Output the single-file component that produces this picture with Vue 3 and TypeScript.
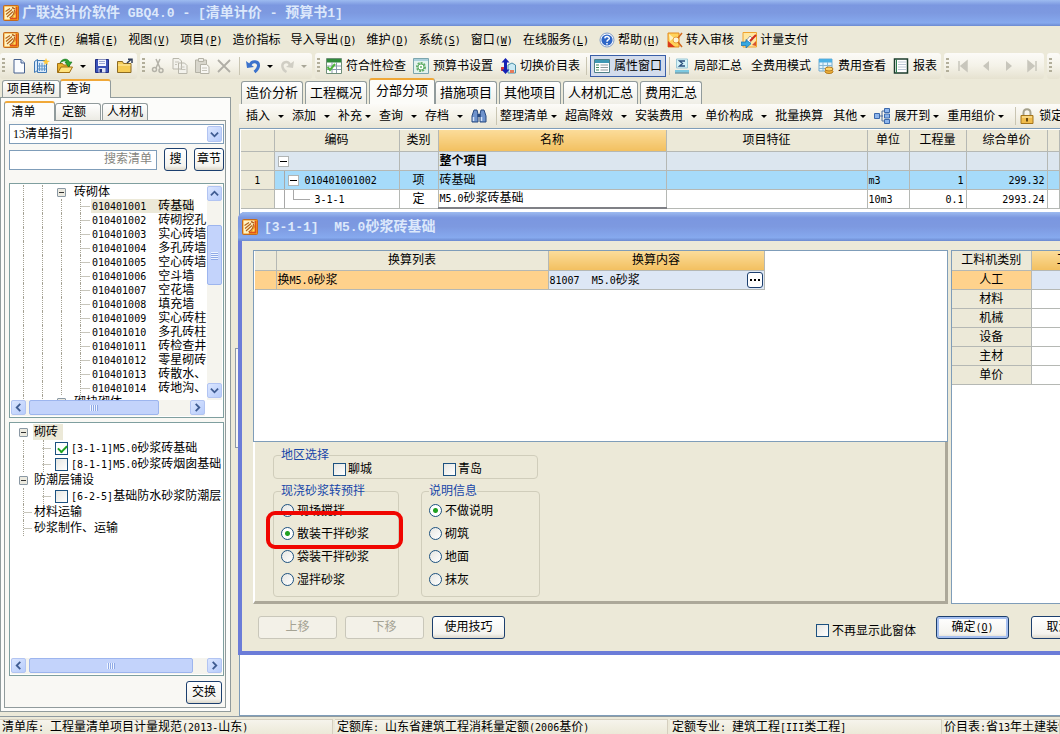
<script setup lang="ts">
import { h, ref } from 'vue'

// Splits mixed text so that half-width characters get the fixed-pitch face.
const Mix = (props: { s: string }) =>
  h(
    'span',
    { class: 'mix' },
    props.s
      .split(/([\x20-\x7e]+)/)
      .filter(Boolean)
      .map((part) => (/^[\x20-\x7e]/.test(part) ? h('span', { class: 'half' }, part) : part)),
  )
Mix.props = ['s']

interface MenuItem { label: string; key?: string; icon?: string }
const menu: MenuItem[] = [
  { label: '文件', key: 'F' },
  { label: '编辑', key: 'E' },
  { label: '视图', key: 'V' },
  { label: '项目', key: 'P' },
  { label: '造价指标' },
  { label: '导入导出', key: 'D' },
  { label: '维护', key: 'D' },
  { label: '系统', key: 'S' },
  { label: '窗口', key: 'W' },
  { label: '在线服务', key: 'L' },
  { label: '帮助', key: 'H', icon: 'help' },
  { label: '转入审核', icon: 'audit' },
  { label: '计量支付', icon: 'pay' },
]

interface Action { label?: string; icon?: string; caret?: 'near' | 'far'; sep?: boolean; flat?: boolean }
const actions: Action[] = [
  { label: '插入', caret: 'far' },
  { label: '添加', caret: 'far' },
  { label: '补充', caret: 'near' },
  { label: '查询', caret: 'far' },
  { label: '存档', caret: 'far' },
  { icon: 'find' },
  { sep: true },
  { label: '整理清单', caret: 'near' },
  { label: '超高降效', caret: 'far' },
  { label: '安装费用', caret: 'far' },
  { label: '单价构成', caret: 'far' },
  { label: '批量换算', flat: true },
  { label: '其他', caret: 'near' },
  { label: '展开到', icon: 'expand', caret: 'near' },
  { label: '重用组价', caret: 'near' },
  { sep: true },
  { label: '锁定', icon: 'lock' },
]

const pages = ['造价分析', '工程概况', '分部分项', '措施项目', '其他项目', '人材机汇总', '费用汇总']
const page = ref('分部分项')

const listItems = [
  '砖基础', '砖砌挖孔', '实心砖墙', '多孔砖墙', '空心砖墙', '空斗墙', '空花墙',
  '填充墙', '实心砖柱', '多孔砖柱', '砖检查井', '零星砌砖', '砖散水、', '砖地沟、',
].map((name, i) => ({ code: '0104010' + String(i + 1).padStart(2, '0'), name }))

const kinds = ['材料', '机械', '设备', '主材', '单价']
const mortar = ref('散装干拌砂浆')
const mortars = ['现场搅拌', '散装干拌砂浆', '袋装干拌砂浆', '湿拌砂浆']
const note = ref('不做说明')
const notes = ['不做说明', '砌筑', '地面', '抹灰']
const regions = ['聊城', '青岛']
const picked = ref(true)
const library = ref('13清单指引')
</script>

<template>
  <div class="app">
    <svg class="defs" aria-hidden="true">
      <symbol id="i-app" viewBox="0 0 16 16">
        <rect x=".5" y=".5" width="15" height="15" rx="1" fill="#f39a1c" stroke="#c46a1c" />
        <path d="M1.500 1.500h11v4l-2 5-4 4h-5z" fill="#fff3c4" />
        <path d="M2.500 6.500L7 3.500M3 9.500l6-5M4 12l6-5.500M6.500 13c3-1.500 5-4 5-8" fill="none" stroke="#b5651c" stroke-width="1.200" />
        <path d="M9 2.500l3 1.500" stroke="#b5651c" stroke-width="1.500" />
        <path d="M13.500 2v11.500H7" fill="none" stroke="#e0501c" stroke-width="1.500" />
        <path d="M10 12.500l2.500-4v4z" fill="#ffe060" />
      </symbol>
      <symbol id="i-help" viewBox="0 0 16 16">
        <circle cx="8" cy="8" r="7" fill="#fff" stroke="#7f9cc8" />
        <circle cx="8" cy="8" r="5.6" fill="#2e66c6" />
        <path d="M5.8 6.4C6 4 10.400 4 10.300 6.500 10.200 8 8 8 8 9.700M8 11v1.400" fill="none" stroke="#fff" stroke-width="1.500" />
      </symbol>
      <symbol id="i-audit" viewBox="0 0 16 16">
        <path d="M1 1h11v14H1z" fill="#ffd35a" stroke="#e58a1e" />
        <path d="M1 15V9l7 6z" fill="#d93a1c" />
        <path d="M2 2l5 4-4 3z" fill="#fff1c0" />
        <circle cx="9" cy="8" r="3" fill="#fff4d8" stroke="#e5a23e" />
        <path d="M11 6l4-5M11 10l4 5" stroke="#d2691e" stroke-width="1.500" />
      </symbol>
      <symbol id="i-pay" viewBox="0 0 16 16">
        <path d="M2 .5h13.500V15H2z" fill="#ffe7a0" stroke="#f0a22e" />
        <path d="M4 10l5-6 3 3-5 6z" fill="#fff" stroke="#8a8a8a" stroke-width=".8" />
        <path d="M9 9l6-6" stroke="#cf2a1c" stroke-width="2" />
        <path d="M11 13l4-4v5z" fill="#d9552c" />
        <path d="M0 10h5V7.500l5 4.200L5 16v-2.500H0z" fill="#36a8e0" stroke="#1a6fae" stroke-width=".7" />
      </symbol>
      <symbol id="i-new" viewBox="0 0 16 16">
        <path d="M3 1.500h7l3.500 3.500v10H3z" fill="#fafcff" stroke="#47618f" />
        <path d="M10 1.500V5h3.500" fill="#cfdcf2" stroke="#47618f" />
      </symbol>
      <symbol id="i-book" viewBox="0 0 16 16">
        <path d="M.5 3.500l3-2v11l-3 2zM3.500 2.500h9v12h-9z" fill="#d9e9fa" stroke="#3f78b4" />
        <path d="M5.500 5v8M8 5v8M10.500 7v6M4 8h8M4 11h8" stroke="#5f96cb" />
        <path d="M12 0l1 2.500L16 3l-2.500 1.500L14 7l-2-1.500L10 7l.5-2.500L8.500 3l2.500-.5z" fill="#ffc93c" />
      </symbol>
      <symbol id="i-open" viewBox="0 0 16 16">
        <path d="M.5 14.500v-9h5l1 1.500h6v7.500z" fill="#e8b22c" stroke="#a06f12" />
        <path d="M1 14.500L4 9h11.500l-3 5.500z" fill="#ffe27c" stroke="#a06f12" />
        <path d="M3 5C5 0 11 0 12.500 4h2.500L11.500 9 8 4h2C9 2.500 6 2.500 3 5z" fill="#2fa532" stroke="#12701a" stroke-width=".6" />
      </symbol>
      <symbol id="i-save" viewBox="0 0 16 16">
        <path d="M1.500 1.500h13v13h-13z" fill="#3b52b8" stroke="#202d80" />
        <path d="M4 1.500h8V8H4z" fill="#f4f6ff" />
        <path d="M5 3.500h6M5 5.500h6" stroke="#9aa6d4" />
        <path d="M4.500 10h7v4.500h-7z" fill="#dfe3f4" /><path d="M5.500 11h2.500v3.500H5.500z" fill="#202d80" />
      </symbol>
      <symbol id="i-folder" viewBox="0 0 16 16">
        <path d="M.5 3.500h5l1 2h7.500v9H.5z" fill="#f6cc55" stroke="#8d6b22" />
        <path d="M1 7h12.500" stroke="#fff0b0" />
        <path d="M10 5l4-3.500M11 1.300h4V5" fill="none" stroke="#33405c" stroke-width="1.500" />
      </symbol>
      <symbol id="i-cut" viewBox="0 0 16 16">
        <path d="M6 1l4 9M10 1L6 10" stroke="#b4b2a8" stroke-width="1.500" />
        <circle cx="4.500" cy="11.500" r="2" fill="none" stroke="#b4b2a8" stroke-width="1.500" />
        <circle cx="11" cy="12.500" r="2" fill="none" stroke="#b4b2a8" stroke-width="1.500" />
      </symbol>
      <symbol id="i-copy" viewBox="0 0 16 16">
        <path d="M1 .5h6l2.500 2.500v8H1zM6.500 5h6l2.500 2.500v8H6.500z" fill="#f3f2ec" stroke="#b9b7ac" />
        <path d="M3 4h4M3 6.500h2M8.500 9h4M8.500 11.500h5" stroke="#c6c4ba" />
      </symbol>
      <symbol id="i-paste" viewBox="0 0 16 16">
        <path d="M1.500 2h11v12.500h-11z" fill="#d8d6cc" stroke="#b4b2a6" />
        <path d="M4.500.5h5v3h-5z" fill="#efeee8" stroke="#b4b2a6" />
        <path d="M6.500 6.500h6l2.500 2v7H6.500z" fill="#f8f7f3" stroke="#b4b2a6" /><path d="M8 10h5M8 12.500h5" stroke="#c6c4ba" />
      </symbol>
      <symbol id="i-del" viewBox="0 0 16 16"><path d="M2 2l12 12M14 2L2 14" stroke="#b0aea6" stroke-width="1.800" /></symbol>
      <symbol id="i-undo" viewBox="0 0 16 16">
        <path d="M5 7c2-5 9-4 8.500 1-.3 2.500-1.500 4-4 6" fill="none" stroke="#3b72cc" stroke-width="3" />
        <path d="M1 3l1 7 7-1z" fill="#3b72cc" />
      </symbol>
      <symbol id="i-redo" viewBox="0 0 16 16">
        <path d="M11 7C9 2 2.500 4 3.500 9c.5 2.500 2 4 4 5" fill="none" stroke="#d0cec4" stroke-width="2.500" />
        <path d="M15 3l-1 7-7-1z" fill="#d0cec4" />
      </symbol>
      <symbol id="i-check" viewBox="0 0 16 16">
        <path d="M.5.500h15v15H.5z" fill="#fff" stroke="#6f8f78" /><path d="M1 1h14v3.500H1z" fill="#2f8a3a" />
        <path d="M1 8h14M1 11.500h14M6 4v11M10.500 4v11" stroke="#8a9cab" />
        <path d="M1.500 9l2.500 3 5-6" fill="none" stroke="#4cb53c" stroke-width="2" />
      </symbol>
      <symbol id="i-gear" viewBox="0 0 16 16">
        <path d="M.5.500h15v15H.5z" fill="#e4f3ee" stroke="#7ca6ae" /><path d="M1 1h14v2H1z" fill="#a9cfdc" />
        <circle cx="8" cy="9" r="4" fill="none" stroke="#62ae68" stroke-width="2" stroke-dasharray="2 1" />
        <circle cx="8" cy="9" r="3" fill="#fff" stroke="#62ae68" /><circle cx="8" cy="9" r="1" fill="#62ae68" />
      </symbol>
      <symbol id="i-swap" viewBox="0 0 16 16">
        <path d="M1 9h3v4H1z" fill="#d33a3a" /><path d="M8 7l4-2 3.500 2v8H8z" fill="#cbeaf4" stroke="#4a8ea8" />
        <path d="M10 12h4v3h-4z" fill="#e57a5a" />
        <path d="M5.500 0l4 4.500H7v7h2.500l-4 4.500-4-4.500H4v-7H1.500z" fill="#1420b4" />
      </symbol>
      <symbol id="i-props" viewBox="0 0 16 16">
        <path d="M.5 1.500h15v13H.5z" fill="#fff" stroke="#4e8088" /><path d="M1 2h14v3H1z" fill="#3d98b4" />
        <path d="M2 7h3M2 9.500h3M2 12h3" stroke="#3d8a58" /><path d="M6.500 7H14M6.500 9.500H14M6.500 12H14" stroke="#8d9a9d" />
      </symbol>
      <symbol id="i-sum" viewBox="0 0 16 16">
        <path d="M2.500 1h11v9h-11z" fill="#d5f2f8" stroke="#9cc8d6" />
        <path d="M11 3H5.500l3 2.500-3 2.500H11" fill="none" stroke="#2c4f7c" stroke-width="1.300" />
        <path d="M1 12h14v2.500H1z" fill="#7cc8e0" /><path d="M1 15h14" stroke="#3a7a94" />
      </symbol>
      <symbol id="i-fee" viewBox="0 0 16 16">
        <path d="M1 1h13v12H1z" fill="#e5f4fc" stroke="#74acd0" /><path d="M1 1h13v3.500H1z" fill="#4cb0e4" />
        <path d="M1 7.500h13M1 10.500h13M5 4v9M9.500 4v9" stroke="#86b6d4" />
        <ellipse cx="11" cy="13.500" rx="4" ry="2" fill="#f4b53c" stroke="#b2781c" />
        <ellipse cx="11" cy="11" rx="4" ry="2" fill="#ffd468" stroke="#b2781c" />
      </symbol>
      <symbol id="i-report" viewBox="0 0 16 16">
        <path d="M1.500 1h13v14h-13z" fill="#fff" stroke="#1c3c2c" stroke-width="1.500" /><path d="M3.500 1v14" stroke="#2c7a4c" />
        <path d="M5 4h8M5 6.500h8M5 9h8M5 11.500h8" stroke="#bcc8d6" />
      </symbol>
      <symbol id="i-first" viewBox="0 0 16 16"><path d="M4 3v10M12 3v10L6 8z" fill="#c8c6bc" stroke="#c8c6bc" stroke-width="1.500" /></symbol>
      <symbol id="i-prev" viewBox="0 0 16 16"><path d="M11 3v10L5 8z" fill="#c8c6bc" /></symbol>
      <symbol id="i-next" viewBox="0 0 16 16"><path d="M5 3v10l6-5z" fill="#c8c6bc" /></symbol>
      <symbol id="i-last" viewBox="0 0 16 16"><path d="M12 3v10M4 3v10l6-5z" fill="#c8c6bc" stroke="#c8c6bc" stroke-width="1.500" /></symbol>
      <symbol id="i-find" viewBox="0 0 16 16">
        <path d="M3 2h3l1 4v8H1V8zM13 2h-3L9 6v8h6V8z" fill="#6f93cc" stroke="#27497f" />
        <path d="M6.500 6h3v3h-3z" fill="#27497f" /><path d="M2.500 9v4M10.500 9v4" stroke="#d4e2f8" stroke-width="1.500" />
      </symbol>
      <symbol id="i-expand" viewBox="0 0 16 16">
        <path d="M5 8h4M8 3v10M8 3h3M8 13h3" fill="none" stroke="#4a6a9c" />
        <path d="M.5 5.500h5v5h-5zM10.500.500h5v4h-5zM10.500 6h5v4h-5zM10.500 11.500h5v4h-5z" fill="#8db5ec" stroke="#3b68ac" />
      </symbol>
      <symbol id="i-lock" viewBox="0 0 16 16">
        <path d="M4.500 8V5c0-5 7-5 7 0v3" fill="none" stroke="#a5a18c" stroke-width="2" />
        <path d="M2 7.500h12v8H2z" fill="#f0bc4c" stroke="#a4741a" /><path d="M3 9h10" stroke="#fff0b4" />
        <path d="M8 10v3.500" stroke="#6b4a10" stroke-width="2" />
      </symbol>
      <symbol id="i-down" viewBox="0 0 10 10"><path d="M1 3l4 4 4-4" fill="none" stroke="#3f5c92" stroke-width="2" /></symbol>
      <symbol id="i-up" viewBox="0 0 10 10"><path d="M1 7l4-4 4 4" fill="none" stroke="#3f5c92" stroke-width="2" /></symbol>
      <symbol id="i-left" viewBox="0 0 10 10"><path d="M7 1L3 5l4 4" fill="none" stroke="#3f5c92" stroke-width="2" /></symbol>
      <symbol id="i-right" viewBox="0 0 10 10"><path d="M3 1l4 4-4 4" fill="none" stroke="#3f5c92" stroke-width="2" /></symbol>
    </svg>

    <header class="titlebar">
      <svg class="ic"><use href="#i-app" /></svg>
      <Mix s="广联达计价软件 GBQ4.0 - [清单计价 - 预算书1]" />
    </header>

    <nav class="menu">
      <svg class="ic"><use href="#i-app" /></svg>
      <button v-for="m in menu" :key="m.label">
        <svg v-if="m.icon" class="ic"><use :href="'#i-' + m.icon" /></svg>
        <span>{{ m.label }}<span v-if="m.key" class="half">(<u>{{ m.key }}</u>)</span></span>
      </button>
    </nav>

    <div class="bars">
      <div class="bar">
        <i class="grip"></i>
        <button class="tb" aria-label="新建"><svg class="ic"><use href="#i-new" /></svg></button>
        <button class="tb" aria-label="新建工程"><svg class="ic"><use href="#i-book" /></svg></button>
        <button class="tb" aria-label="打开"><svg class="ic"><use href="#i-open" /></svg></button>
        <i class="caret"></i>
        <button class="tb" aria-label="保存"><svg class="ic"><use href="#i-save" /></svg></button>
        <button class="tb" aria-label="目录"><svg class="ic"><use href="#i-folder" /></svg></button>
      </div>
      <div class="bar edit">
        <i class="grip"></i>
        <button class="tb" aria-label="剪切"><svg class="ic"><use href="#i-cut" /></svg></button>
        <button class="tb" aria-label="复制"><svg class="ic"><use href="#i-copy" /></svg></button>
        <button class="tb" aria-label="粘贴"><svg class="ic"><use href="#i-paste" /></svg></button>
        <button class="tb" aria-label="删除"><svg class="ic"><use href="#i-del" /></svg></button>
        <i class="sep"></i>
        <button class="tb narrow" aria-label="撤销"><svg class="ic"><use href="#i-undo" /></svg></button>
        <i class="caret"></i>
        <button class="tb narrow" aria-label="恢复"><svg class="ic"><use href="#i-redo" /></svg></button>
        <i class="caret off"></i>
      </div>
      <div class="bar">
        <i class="grip"></i>
        <button class="lb"><svg class="ic"><use href="#i-check" /></svg>符合性检查</button>
        <button class="lb"><svg class="ic"><use href="#i-gear" /></svg>预算书设置</button>
        <button class="lb"><svg class="ic"><use href="#i-swap" /></svg>切换价目表</button>
        <i class="sep"></i>
        <button class="lb on"><svg class="ic"><use href="#i-props" /></svg>属性窗口</button>
        <i class="sep"></i>
        <button class="lb tight"><svg class="ic"><use href="#i-sum" /></svg>局部汇总</button>
        <button class="lb">全费用模式</button>
        <button class="lb"><svg class="ic"><use href="#i-fee" /></svg>费用查看</button>
        <button class="lb"><svg class="ic"><use href="#i-report" /></svg>报表</button>
      </div>
      <div class="bar">
        <i class="grip"></i>
        <button class="tb" aria-label="首条"><svg class="ic"><use href="#i-first" /></svg></button>
        <button class="tb" aria-label="上一条"><svg class="ic"><use href="#i-prev" /></svg></button>
        <button class="tb" aria-label="下一条"><svg class="ic"><use href="#i-next" /></svg></button>
        <button class="tb" aria-label="末条"><svg class="ic"><use href="#i-last" /></svg></button>
      </div>
      <div class="bar rest"><i class="grip"></i></div>
    </div>

    <div class="work">
      <aside class="side">
        <div class="tabs outer">
          <button class="tab">项目结构</button>
          <button class="tab active wide">查询</button>
        </div>
        <div class="pane">
          <div class="tabs inner">
            <button class="tab active">清单</button>
            <button class="tab">定额</button>
            <button class="tab last">人材机</button>
          </div>
          <div class="query">
            <div class="combo">
              <select v-model="library" aria-label="清单库"><option>13清单指引</option></select>
              <span class="drop"><svg><use href="#i-down" /></svg></span>
            </div>
            <div class="search">
              <input type="text" placeholder="搜索清单" aria-label="搜索清单" />
              <button class="btn mini">搜</button>
              <button class="btn mini">章节</button>
            </div>
            <div class="tree first">
              <div class="view">
                <div class="nodes">
                  <div class="node parent">
                    <i class="guide"></i><i class="guide"></i><i class="box"></i><span>砖砌体</span>
                  </div>
                  <div v-for="(it, i) in listItems" :key="it.code" class="node">
                    <i class="guide"></i><i class="guide"></i><i class="guide"></i><i class="guide stub"></i>
                    <span class="leaf" :class="{ chosen: i === 0 }"><Mix :s="it.code" /><span>{{ it.name }}</span></span>
                  </div>
                  <div class="node parent">
                    <i class="guide"></i><i class="guide"></i><i class="box"></i><span>砌块砌体</span>
                  </div>
                </div>
                <div class="vscroll">
                  <button aria-label="向上"><svg><use href="#i-up" /></svg></button>
                  <i class="thumb"></i>
                  <button class="end" aria-label="向下"><svg><use href="#i-down" /></svg></button>
                </div>
              </div>
              <div class="hscroll short">
                <button aria-label="向左"><svg><use href="#i-left" /></svg></button>
                <i class="thumb"></i>
                <button class="end" aria-label="向右"><svg><use href="#i-right" /></svg></button>
              </div>
            </div>
            <div class="tree second">
              <div class="quota">
                <div class="q top"><i class="box"></i><span class="chosen">砌砖</span></div>
                <label class="q sub"><input v-model="picked" type="checkbox" /><Mix s="[3-1-1]M5.0砂浆砖基础" /></label>
                <label class="q sub"><input type="checkbox" /><Mix s="[8-1-1]M5.0砂浆砖烟囱基础" /></label>
                <div class="q top"><i class="box"></i><span>防潮层铺设</span></div>
                <label class="q sub"><input type="checkbox" /><Mix s="[6-2-5]基础防水砂浆防潮层2" /></label>
                <div class="q top"><i class="stem"></i><span>材料运输</span></div>
                <div class="q top"><i class="stem"></i><span>砂浆制作、运输</span></div>
              </div>
              <div class="hscroll">
                <button aria-label="向左"><svg><use href="#i-left" /></svg></button>
                <i class="thumb"></i>
                <button class="end" aria-label="向右"><svg><use href="#i-right" /></svg></button>
              </div>
            </div>
            <div class="swap"><button class="btn mini">交换</button></div>
          </div>
        </div>
      </aside>

      <div class="splitter"><i></i></div>

      <main class="main">
        <div class="pages">
          <button v-for="p in pages" :key="p" :class="{ active: p === page }" @click="page = p">{{ p }}</button>
        </div>
        <div class="actions">
          <template v-for="(a, i) in actions" :key="i">
            <i v-if="a.sep" class="sep"></i>
            <button v-else :class="[a.caret, { flat: a.flat }]" :aria-label="a.label ?? '查找'">
              <svg v-if="a.icon" class="ic"><use :href="'#i-' + a.icon" /></svg>{{ a.label }}<i v-if="a.caret" class="caret"></i>
            </button>
          </template>
        </div>
        <div class="sheet">
          <table class="grid">
            <colgroup>
              <col class="w-no" /><col class="w-code" /><col class="w-kind" /><col class="w-name" /><col class="w-feat" />
              <col class="w-unit" /><col class="w-qty" /><col class="w-price" /><col />
            </colgroup>
            <thead>
              <tr>
                <th></th><th>编码</th><th>类别</th><th class="hot">名称</th><th>项目特征</th><th>单位</th><th>工程量</th><th>综合单价</th><th></th>
              </tr>
            </thead>
            <tbody>
              <tr class="whole">
                <td class="no"></td><td class="code"><i class="fold"></i></td><td></td><td><b>整个项目</b></td><td></td><td></td><td></td><td></td><td></td>
              </tr>
              <tr class="sel">
                <td class="no"><Mix s="1" /></td>
                <td class="code lvl"><i class="fold"></i><Mix s="010401001002" /></td>
                <td class="mid">项</td><td>砖基础</td><td></td><td><Mix s="m3" /></td>
                <td class="num"><Mix s="1" /></td><td class="num"><Mix s="299.32" /></td><td></td>
              </tr>
              <tr>
                <td class="no"></td>
                <td class="code lvl"><i class="elbow"></i><Mix s="3-1-1" /></td>
                <td class="mid">定</td><td class="edge"><Mix s="M5.0砂浆砖基础" /></td><td></td><td><Mix s="10m3" /></td>
                <td class="num"><Mix s="0.1" /></td><td class="num"><Mix s="2993.24" /></td><td></td>
              </tr>
            </tbody>
          </table>
        </div>
      </main>
    </div>

    <footer class="status">
      <span><Mix s="清单库: 工程量清单项目计量规范(2013-山东)" /></span>
      <span><Mix s="定额库: 山东省建筑工程消耗量定额(2006基价)" /></span>
      <span class="third"><Mix s="定额专业: 建筑工程[III类工程]" /></span>
      <span class="fourth"><Mix s="价目表:省13年土建装饰" /></span>
    </footer>

    <section class="dialog" role="dialog" aria-label="[3-1-1] M5.0砂浆砖基础">
      <header class="cap">
        <svg class="ic"><use href="#i-app" /></svg>
        <Mix s="[3-1-1]  M5.0砂浆砖基础" />
      </header>
      <div class="content">
        <div class="split">
          <div class="left">
            <div class="white">
              <table class="conv">
                <colgroup><col class="c-no" /><col class="c-list" /><col class="c-body" /></colgroup>
                <thead><tr><th></th><th>换算列表</th><th class="hot">换算内容</th></tr></thead>
                <tbody>
                  <tr>
                    <td></td><td><Mix s="换M5.0砂浆" /></td>
                    <td class="value"><div><Mix s="81007  M5.0砂浆" /><button class="more" aria-label="选择"><i></i><i></i><i></i></button></div></td>
                  </tr>
                </tbody>
              </table>
            </div>
            <div class="options">
              <fieldset class="region">
                <legend>地区选择</legend>
                <label v-for="r in regions" :key="r"><input type="checkbox" />{{ r }}</label>
              </fieldset>
              <div class="pair">
                <fieldset class="mortar">
                  <legend>现浇砂浆转预拌</legend>
                  <label v-for="m in mortars" :key="m"><input v-model="mortar" type="radio" name="mortar" :value="m" />{{ m }}</label>
                  <i class="mark"></i>
                </fieldset>
                <fieldset class="note">
                  <legend>说明信息</legend>
                  <label v-for="n in notes" :key="n"><input v-model="note" type="radio" name="note" :value="n" />{{ n }}</label>
                </fieldset>
              </div>
            </div>
          </div>
          <div class="right">
            <table class="kinds">
              <colgroup><col class="k-name" /><col /></colgroup>
              <thead><tr><th>工料机类别</th><th class="hot">工料</th></tr></thead>
              <tbody>
                <tr class="cur"><th>人工</th><td></td></tr>
                <tr v-for="k in kinds" :key="k"><th>{{ k }}</th><td></td></tr>
              </tbody>
            </table>
          </div>
        </div>
        <div class="foot">
          <button class="btn big" disabled>上移</button>
          <button class="btn big" disabled>下移</button>
          <button class="btn">使用技巧</button>
          <span class="fill"></span>
          <label class="hide"><input type="checkbox" />不再显示此窗体</label>
          <button class="btn ok">确定<span class="half">(<u>O</u>)</span></button>
          <button class="btn cancel">取消<span class="half">(<u>C</u>)</span></button>
        </div>
      </div>
    </section>
  </div>
</template>

<style>
html, body { margin: 0; overflow: hidden; }
.mix { white-space: pre; }
.half { font-family: "DejaVu Sans Mono", monospace; font-size: 10px; line-height: 0; }
</style>

<style scoped>
* { box-sizing: border-box; }
.app {
  position: relative; display: flex; flex-direction: column; height: 100vh; overflow: hidden;
  background: #ece9d8; color: #000; font: 12px/14px "Liberation Serif", "Noto Sans CJK SC", sans-serif;
}
.defs { position: absolute; width: 0; height: 0; }
button { font: inherit; color: inherit; background: none; border: 0; padding: 0; margin: 0; white-space: nowrap; flex: none; }
i { display: block; flex: none; }
.ic { width: 16px; height: 16px; flex: none; display: block; }

.titlebar, .cap {
  display: flex; align-items: center; gap: 3px; flex: none; color: #dce8fb; font-size: 14px; font-weight: bold; white-space: nowrap;
  background: linear-gradient(#9dbbf0, #7b97e0 20%, #7d99e0 50%, #86a9ee 88%, #6c8ad0);
}
.titlebar { height: 26px; padding: 0 3px; }
.titlebar :deep(.half), .cap :deep(.half) { font-family: "Liberation Mono", monospace; font-size: 13px; }

.menu { display: flex; align-items: center; height: 27px; flex: none; padding-left: 3px; }
.menu .ic { margin-right: 3px; }
.menu > .ic { margin-right: 5px; }
.menu button { display: flex; align-items: center; margin-right: 10px; }
.menu button:nth-of-type(n + 11) { margin-right: 7px; }

.bars { display: flex; flex: none; height: 26px; gap: 3px; }
.bar {
  display: flex; align-items: center; padding: 0 1px; border-radius: 3px;
  background: linear-gradient(#fcfbf8, #f4f2e8 50%, #e6e2d0);
}
.bar.rest { flex: 1; }
.grip { width: 3px; height: 16px; margin: 0 2px 0 1px; background: repeating-linear-gradient(#b2ae9a 0 2px, transparent 2px 4px); }
.tb { display: flex; justify-content: center; width: 23px; }
.edit .tb { width: 22px; }
.edit .tb.narrow { width: 20px; }
.caret { width: 0; height: 0; margin: 0 6px; border: 3px solid transparent; border-top-color: #000; border-bottom: 0; }
.caret.off { border-top-color: #a8a698; }
.bar .caret { margin: 0 4px; }
.sep { width: 1px; height: 18px; margin: 0 3px; background: #c9c5b2; }
.edit .sep { margin: 0 3px 0 4px; }
.lb { display: flex; align-items: center; gap: 4px; height: 22px; padding: 0 3px 0 4px; }
.lb.on { border: 1px solid #3a5fa8; background: #d3dcec; padding: 0 3px; }
.lb.tight { padding: 0 5px 0 1px; }

.work { display: flex; flex: 1; min-height: 0; }
.side { width: 231px; flex: none; display: flex; flex-direction: column; padding-bottom: 4px; }
.tabs { display: flex; align-items: flex-end; flex: none; }
.tab { border: 1px solid #919b9c; border-bottom: 0; border-radius: 3px 3px 0 0; background: linear-gradient(#fff, #ecebe4); }
.tab.active { border-top: 2px solid #f0a838; background: #fcfcfa; }
.outer { height: 18px; padding-left: 2px; }
.outer .tab { height: 17px; width: 58px; line-height: 15px; }
.outer .tab.wide { height: 19px; width: 51px; margin-bottom: -1px; padding-right: 14px; position: relative; z-index: 1; }
.pane { flex: 1; display: flex; flex-direction: column; min-height: 0; border: 1px solid #919b9c; background: #fcfcfa; padding: 2px 4px 3px 3px; }
.inner { height: 20px; }
.inner .tab { width: 46px; height: 17px; line-height: 16px; padding-right: 8px; }
.inner .tab.active { width: 51px; height: 20px; padding-right: 12px; position: relative; z-index: 1; margin-bottom: -1px; }
.inner .tab.last { margin-left: 1px; padding: 0; }
.query {
  flex: 1; min-height: 0; display: flex; flex-direction: column; padding: 3px 1px 2px 4px;
  border: 1px solid #919b9c; background: #f9f8f4;
}
.combo { position: relative; height: 20px; flex: none; }
.combo select { width: 100%; height: 20px; appearance: none; border: 1px solid #7f9db9; border-radius: 0; background: #fff; padding: 0 3px; font: inherit; color: #000; }
.drop, .vscroll button, .hscroll button {
  display: flex; align-items: center; justify-content: center; width: 15px; height: 15px; flex: none;
  border: 1px solid #b2c4f2; border-radius: 2px; background: linear-gradient(135deg, #dbe6ff, #b7ccfb);
}
.drop { position: absolute; right: 2px; top: 2px; height: 16px; pointer-events: none; }
.drop svg, .vscroll svg, .hscroll svg { width: 9px; height: 9px; }
.search { display: flex; gap: 7px; align-items: center; margin: 4px 0 12px; flex: none; }
.search input { width: 0; flex: 1; height: 20px; border: 1px solid #7f9db9; background: #fff; padding: 0 4px; font: inherit; text-align: right; }
.search input::placeholder { color: #85857d; opacity: 1; }
.btn {
  height: 23px; min-width: 73px; border: 1px solid #1c3f6e; border-radius: 3px; line-height: 21px;
  background: linear-gradient(#fff, #f4f3ee 80%, #dcd8cc);
}
.btn.mini { min-width: 23px; padding: 0 2px; }
.btn:disabled { color: #a5a394; border-color: #c9c7ba; background: #f3f1e8; }
.btn.ok { box-shadow: inset 0 0 0 2px #a5bff0; }

.tree { display: flex; flex-direction: column; border: 1px solid #7f9f9f; background: #fff; padding: 1px; }
.first { height: 235px; flex: none; }
.second { flex: 1; min-height: 0; margin-top: 4px; }
.view { display: flex; flex: 1; min-height: 0; overflow: hidden; }
.nodes { flex: 1; min-width: 0; overflow: hidden; padding-left: 3px; }
.node { display: flex; height: 14px; white-space: nowrap; align-items: center; }
.guide { width: 19px; height: 14px; margin-left: 9px; margin-right: -9px; border-left: 1px dotted #a5a294; }
.guide.stub { width: 10px; margin-right: 0; background: linear-gradient(90deg, #c8c6bc, #c8c6bc) 0 7px / 9px 1px no-repeat; }
.box { width: 9px; height: 9px; border: 1px solid #8a98a4; border-radius: 1px; background: linear-gradient(#333, #333) 1px 3px / 5px 1px no-repeat, #eceae0; }
.node .box { margin: 0 8px 0 5px; }
.leaf { display: flex; gap: 12px; padding-left: 1px; margin-left: 1px; }
.leaf.chosen { background: #ece9d8; }
.vscroll { width: 15px; display: flex; flex-direction: column; align-items: center; background: #f5f4ee; padding: 1px 0 2px; }
.vscroll .thumb { width: 15px; height: 60px; margin-top: 24px; border: 1px solid #9db5ee; border-radius: 2px; background: repeating-linear-gradient(#eef4ff 0 1px, #8fa9e6 1px 2px) 3px 26px / 7px 8px no-repeat, #c3d3fb; }
.vscroll .end { margin-top: auto; }
.hscroll { display: flex; height: 16px; flex: none; background: #f5f4ee; }
.hscroll.short { margin-right: 17px; }
.hscroll .thumb { flex: 1; height: 15px; margin: 0 14px 0 3px; border: 1px solid #9db5ee; border-radius: 2px; background: repeating-linear-gradient(90deg, #eef4ff 0 1px, #8fa9e6 1px 2px) center / 8px 6px no-repeat, #c3d3fb; }
.hscroll.short .thumb { margin-right: 31px; }
.quota { flex: 1; min-height: 0; overflow: hidden; }
.q { display: flex; align-items: center; height: 16px; white-space: nowrap; }
.top { padding-left: 8px; }
.top .box { margin-right: 5px; }
.top span { padding: 1px; }
.top .chosen { background: #ece9d8; padding-right: 5px; }
.stem { width: 9px; height: 16px; margin: 0 1px 0 4px; border-left: 1px dotted #a5a294; background: linear-gradient(90deg, #c8c6bc, #c8c6bc) 0 8px / 9px 1px no-repeat; }
.sub { padding-left: 12px; background: linear-gradient(90deg, #c8c6bc, #c8c6bc) 31px 8px / 9px 1px no-repeat; border: 0; }
.sub::before { content: ""; width: 19px; height: 16px; flex: none; border-left: 1px dotted #a5a294; border-right: 1px dotted #a5a294; }
.sub input { margin: 0 3px 0 11px; }
.swap { display: flex; justify-content: flex-end; padding: 5px 2px 1px; flex: none; }
.swap .btn { min-width: 36px; }

input[type="checkbox"] { appearance: none; width: 13px; height: 13px; flex: none; border: 1px solid #1c5180; background: linear-gradient(135deg, #e6e6e2, #fff); }
input[type="checkbox"]:checked { background: #fff; }
input[type="checkbox"]:checked::after { content: ""; display: block; width: 7px; height: 4px; margin: 2px; border: 2px solid #21a121; border-top: 0; border-right: 0; transform: rotate(-45deg); }
input[type="radio"] { appearance: none; width: 13px; height: 13px; flex: none; border: 1px solid #1c5180; border-radius: 50%; background: linear-gradient(135deg, #e6e6e2, #fff); }
input[type="radio"]:checked { background: radial-gradient(circle, #21a121 0 2px, #fff 3px); }

.splitter { width: 8px; flex: none; display: flex; align-items: center; justify-content: flex-end; }
.splitter i { width: 4px; height: 100px; border: 1px solid #8d99a8; border-right: 0; background: #f8f7f2; }

.main { flex: 1; min-width: 0; display: flex; flex-direction: column; }
.pages { display: flex; align-items: flex-end; height: 25px; padding-left: 2px; gap: 2px; font-size: 13px; flex: none; }
.pages button { height: 23px; padding: 0 4px; border: 1px solid #919b9c; border-bottom: 0; border-radius: 3px 3px 0 0; background: linear-gradient(#fff, #efeee6); }
.pages .active { height: 26px; padding: 0 6px 3px; margin: 0 -2px 0 0; border-top: 2px solid #f0a838; background: #fcfcf9; }
.actions { display: flex; align-items: center; height: 24px; flex: none; padding-left: 7px; background: linear-gradient(#fcfbf8, #f4f2e8 50%, #e8e5d6); }
.actions button { display: flex; align-items: center; margin-right: 2px; }
.actions .ic { margin-right: 4px; }
.actions .caret { margin: 0 6px 0 8px; }
.actions .near .caret { margin-left: 3px; }
.actions .flat { margin-right: 10px; }
.sheet { flex: 1; min-height: 0; border: 1px solid #7f9db9; border-right: 0; background: #fff; padding: 1px 0 0 1px; }
table { border-collapse: collapse; table-layout: fixed; }
th, td { border: 0 solid #b5b8b4; border-width: 0 1px 1px 0; padding: 0 1px; height: 19px; font-weight: normal; text-align: left; white-space: nowrap; overflow: hidden; }
th { background: #ece9d8; text-align: center; }
th.hot { background: linear-gradient(#fbdc9a, #f2c060); }
.grid { width: 100%; }
.grid thead th { height: 21px; }
.w-no { width: 33px; } .w-code { width: 125px; } .w-kind { width: 39px; } .w-name { width: 228px; } .w-feat { width: 201px; }
.w-unit { width: 42px; } .w-qty { width: 57px; } .w-price { width: 81px; }
.whole td { background: #dce6ef; }
.sel td { background: #a6dbfa; }
.grid .no { background: #ece9d8; text-align: center; }
.grid .mid { text-align: center; }
.grid .num { text-align: right; padding-right: 2px; }
.edge { border-bottom: 2px solid #7f8086; }
.grid .code { padding: 0; }
.code > * { display: inline-block; vertical-align: middle; }
.fold { width: 11px; height: 11px; margin-left: 3px; border: 1px solid #b0b4b4; background: linear-gradient(#000, #000) 1px 4px / 7px 1px no-repeat, #fff; }
.lvl .fold { margin: 0 6px 0 13px; }
.lvl { background-image: linear-gradient(#a8a8a8, #a8a8a8); background-size: 1px 100%; background-position: 9px 0; background-repeat: no-repeat; }
.sel .lvl { background: linear-gradient(#a8a8a8, #a8a8a8) 9px 0 / 1px 100% no-repeat #a6dbfa; }
.elbow { width: 17px; height: 10px; margin: -9px 5px 0 18px; border: solid #a8a8a8; border-width: 0 0 1px 1px; }

.status { display: flex; height: 18px; flex: none; gap: 2px; border-top: 1px solid #8f9aa0; padding-top: 2px; }
.status > span { flex: 0 0 333px; overflow: hidden; padding-left: 2px; border: 1px solid #d5cfbf; border-left: 0; border-bottom: 0; background: linear-gradient(#f6f4ec, #ece9d8); }
.status > .third { flex-basis: 272px; }
.status > .fourth { flex: 1; padding-left: 0; }

.dialog { position: absolute; left: 238px; top: 212px; right: -68px; border: 4px solid #6b7cd8; border-top: 0; border-radius: 7px 7px 0 0; background: #ece9d8; }
.cap { height: 29px; margin: 0 -4px; padding: 0 4px; gap: 6px; border-radius: 7px 7px 0 0; }
.content { padding: 9px 11px 12px; }
.split { display: flex; gap: 3px; }
.left { width: 695px; flex: none; display: flex; flex-direction: column; }
.white { height: 192px; border: 1px solid #7f9db9; background: #fff; padding: 0 1px; }
.conv { width: 509px; }
.c-no { width: 21px; } .c-list { width: 272px; } .c-body { width: 216px; }
.conv td { background: #ffd28c; }
.conv .value { background: #dde7f5; }
.value div { display: flex; align-items: center; justify-content: space-between; height: 18px; }
.more { display: flex; align-items: center; justify-content: center; gap: 2px; width: 16px; height: 16px; border: 1px solid #1c3f6e; border-radius: 3px; background: #fff; }
.more i { width: 2px; height: 2px; background: #000; }
.options { padding: 6px 0 4px 18px; border: solid #aca899; border-width: 0 3px 3px 0; border-left: 2px solid #fff; }
fieldset { position: relative; margin: 0; padding: 0 0 0 7px; border: 1px solid #d0cdbb; border-radius: 4px; min-width: 0; }
legend { padding: 0; color: #1746a8; height: 14px; }
label { display: flex; align-items: center; white-space: nowrap; }
label input { margin: 0 3px 0 0; }
.region { display: grid; grid-template-columns: 110px 1fr; width: 265px; height: 31px; padding: 0 0 4px 59px; }
.region legend { margin-left: -52px; }
.region label { height: 14px; }
.region input { margin-right: 2px; }
.pair { display: flex; gap: 22px; margin-top: 5px; }
.mortar { width: 126px; }
.note { width: 119px; }
.pair label { height: 23px; }
.pair fieldset { padding: 1px 0 5px 7px; }
.mark { position: absolute; left: -8px; top: 13px; width: 137px; height: 38px; border: 4px solid #f00500; border-radius: 9px; pointer-events: none; }
.right { flex: 1; border: 1px solid #7f9db9; background: #fff; }
.kinds { width: 100%; }
.kinds .hot { padding-right: 6px; }
.k-name { width: 79px; }
.cur th { background: #ffd28c; }
.cur td { background: #dde7f5; }
.foot { display: flex; align-items: center; padding: 12px 0 0 5px; }
.foot .btn { margin-right: 9px; }
.foot .big { min-width: 79px; margin-right: 8px; }
.fill { flex: 1; }
.hide { margin-right: 20px; padding-top: 6px; }
.foot .ok { margin-right: 22px; }
</style>
